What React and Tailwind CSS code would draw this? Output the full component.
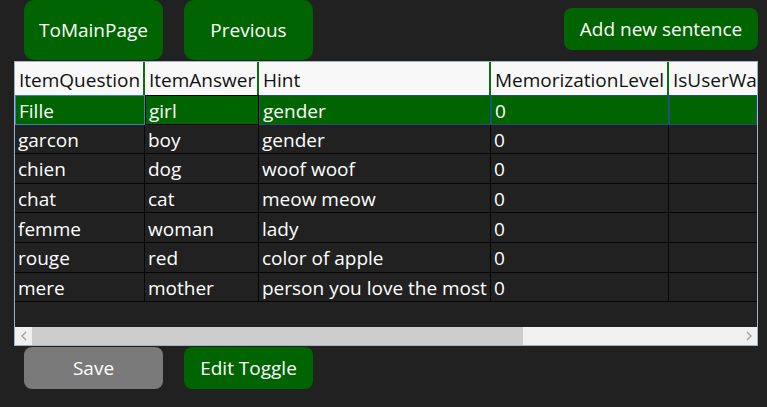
import React from "react";

const rows = [
  ["Fille", "girl", "gender", "0"],
  ["garcon", "boy", "gender", "0"],
  ["chien", "dog", "woof woof", "0"],
  ["chat", "cat", "meow meow", "0"],
  ["femme", "woman", "lady", "0"],
  ["rouge", "red", "color of apple", "0"],
  ["mere", "mother", "person you love the most", "0"],
];

const cols = "grid grid-cols-[130px_114px_232px_178px_1fr]";

export default function App() {
  return (
    <div
      className="w-[767px] h-[407px] bg-[#212121] overflow-hidden flex flex-col"
      style={{ fontFamily: '"Open Sans", "Noto Sans", sans-serif' }}
    >
      <div className="flex items-start h-[61px] pl-[24px] pr-[9px]">
        <button className="w-[139px] h-[60px] rounded-[10px] bg-[#006400] text-white text-[19px] leading-none">
          ToMainPage
        </button>
        <button className="ml-[21px] w-[129px] h-[60px] rounded-[10px] bg-[#006400] text-white text-[19px] leading-none">
          Previous
        </button>
        <button className="ml-auto mt-[8px] w-[194px] h-[42px] rounded-[8px] bg-[#006400] text-white text-[19px] leading-none">
          Add new sentence
        </button>
      </div>

      <div className="ml-[14px] w-[744px] h-[285px] border border-[#9fb2c6] flex flex-col overflow-hidden text-[19px] leading-none">
        <div className={`${cols} h-[33px] bg-[#f8f8f8] text-[#111]`}>
          {["ItemQuestion", "ItemAnswer", "Hint", "MemorizationLevel", "IsUserWa"].map((h, i) => (
            <div
              key={h}
              className={`flex items-center pl-[4px] pt-[3px] whitespace-nowrap overflow-hidden ${i < 4 ? "border-r-2 border-[#0c6e0c]" : ""}`}
            >
              {h}
            </div>
          ))}
        </div>
        {rows.map((r, ri) => {
          const sel = ri === 0;
          return (
            <div
              key={ri}
              className={`${cols} h-[29.6px] ${sel ? "bg-[#006400]" : "border-b border-[#050505]"} text-white`}
            >
              {[...r, ""].map((c, ci) => (
                <div
                  key={ci}
                  className={`flex items-center pl-[3px] pt-[3px] whitespace-nowrap overflow-hidden ${
                    sel
                      ? ci === 0
                        ? "border border-[#3d7fb8]"
                        : ci === 1
                        ? "border border-[#050505]"
                        : "border border-[#22507a]"
                      : ci < 4
                      ? "border-r border-[#050505]"
                      : ""
                  }`}
                >
                  {c}
                </div>
              ))}
            </div>
          );
        })}
        <div className="flex-1" />
        <div className="h-[18px] bg-[#f0f0f0] flex items-center">
          <div className="w-[17px] h-full flex items-center justify-center">
            <svg width="6" height="10" viewBox="0 0 6 10">
              <path d="M5 1 L1 5 L5 9" fill="none" stroke="#9a9a9a" strokeWidth="1.2" />
            </svg>
          </div>
          <div className="w-[491px] h-full bg-[#cdcdcd]" />
          <div className="flex-1" />
          <div className="w-[17px] h-full flex items-center justify-center">
            <svg width="6" height="10" viewBox="0 0 6 10">
              <path d="M1 1 L5 5 L1 9" fill="none" stroke="#9a9a9a" strokeWidth="1.2" />
            </svg>
          </div>
        </div>
      </div>

      <div className="flex pl-[24px] mt-px">
        <button className="w-[139px] h-[42px] rounded-[8px] bg-[#7a7a7a] text-white text-[19px] leading-none">
          Save
        </button>
        <button className="ml-[21px] w-[129px] h-[42px] rounded-[8px] bg-[#006400] text-white text-[19px] leading-none">
          Edit Toggle
        </button>
      </div>
    </div>
  );
}
